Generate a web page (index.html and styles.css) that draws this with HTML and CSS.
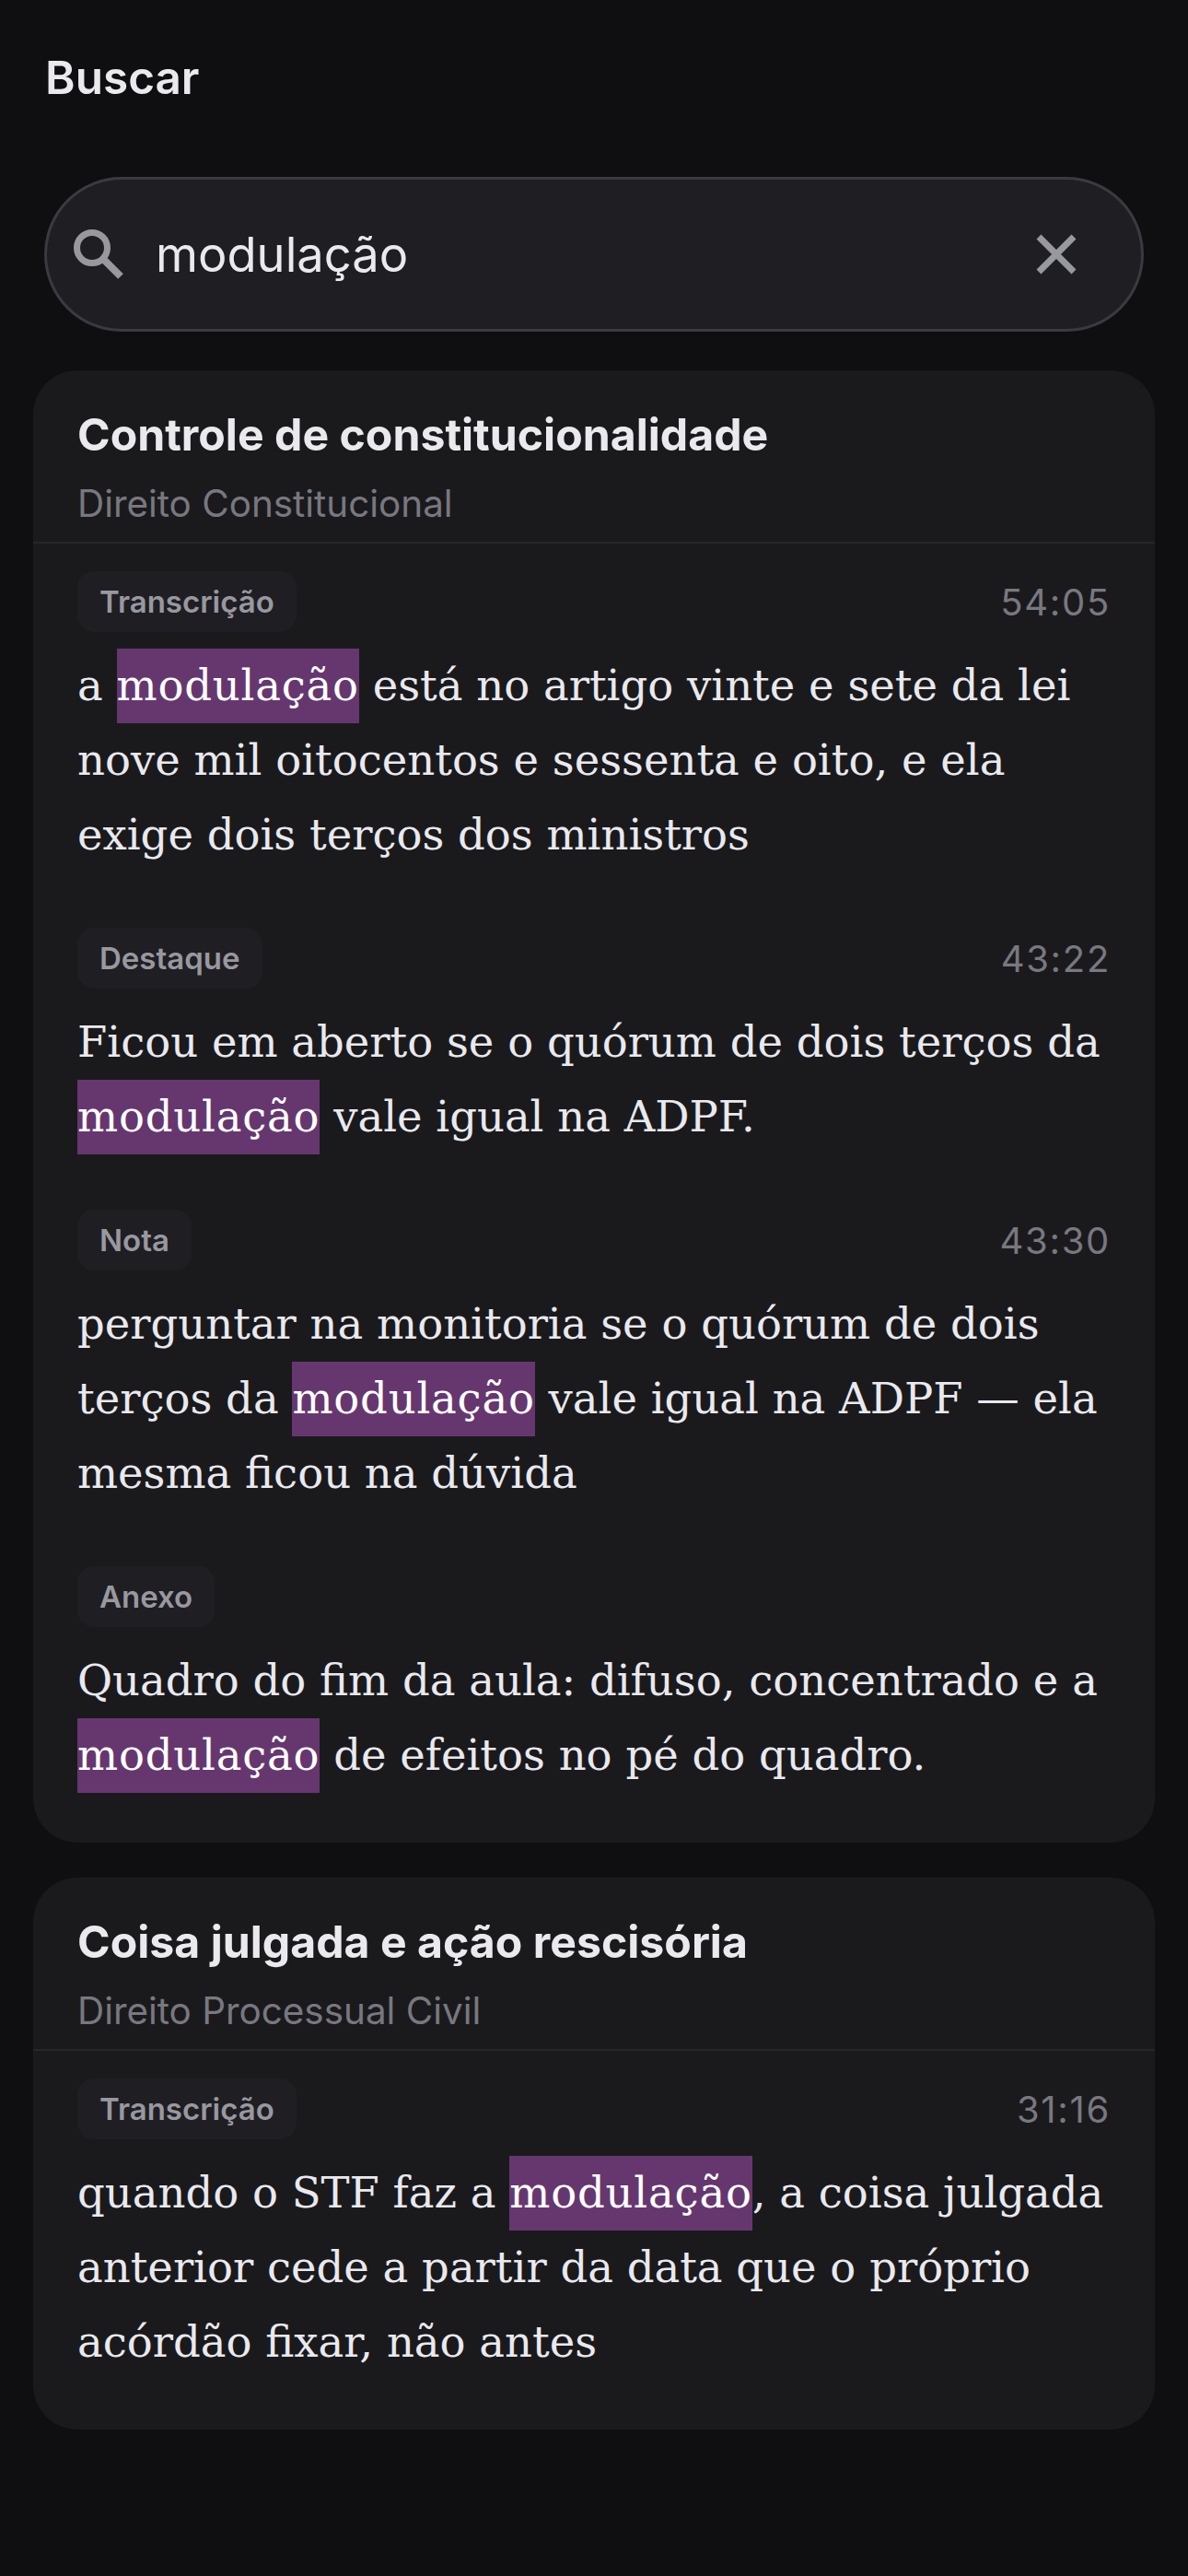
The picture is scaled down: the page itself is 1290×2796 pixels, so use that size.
FILE: index.html
```html
<!DOCTYPE html>
<html lang="pt-BR">

<head>
    <meta charset="UTF-8">
    <title>Buscar</title>
    <link rel="stylesheet" href="styles.css">
</head>

<body>

    <h1 class="page-title">Buscar</h1>

    <!-- Search box -->
    <div class="search-box">
        <svg class="search-icon" viewBox="0 0 54 54" fill="none" stroke="#98989f" stroke-width="7">
            <circle cx="20" cy="20" r="16.5"></circle>
            <path d="M32 32 L51 51" stroke-width="8"></path>
        </svg>
        <span class="search-text">modulação</span>
        <svg class="clear-icon" viewBox="0 0 44 44" fill="none" stroke="#98989f" stroke-width="7">
            <path d="M3 3 L41 41 M41 3 L3 41"></path>
        </svg>
    </div>

    <!-- Result 1 -->
    <section class="card">
        <header class="card-head">
            <h2>Controle de constitucionalidade</h2>
            <p>Direito Constitucional</p>
        </header>

        <div class="hit">
            <div class="hit-top">
                <span class="tag">Transcrição</span>
                <span class="time">54:05</span>
            </div>
            <p class="hit-text">a <mark>modulação</mark> está no artigo vinte e sete da lei nove mil oitocentos e sessenta e oito, e ela exige dois terços dos ministros</p>
        </div>

        <div class="hit">
            <div class="hit-top">
                <span class="tag">Destaque</span>
                <span class="time">43:22</span>
            </div>
            <p class="hit-text">Ficou em aberto se o quórum de dois terços da <mark>modulação</mark> vale igual na ADPF.</p>
        </div>

        <div class="hit">
            <div class="hit-top">
                <span class="tag">Nota</span>
                <span class="time">43:30</span>
            </div>
            <p class="hit-text">perguntar na monitoria se o quórum de dois terços da <mark>modulação</mark> vale igual na ADPF — ela mesma ficou na dúvida</p>
        </div>

        <div class="hit">
            <div class="hit-top">
                <span class="tag">Anexo</span>
            </div>
            <p class="hit-text">Quadro do fim da aula: difuso, concentrado e a <mark>modulação</mark> de efeitos no pé do quadro.</p>
        </div>
    </section>

    <!-- Result 2 -->
    <section class="card">
        <header class="card-head">
            <h2>Coisa julgada e ação rescisória</h2>
            <p>Direito Processual Civil</p>
        </header>

        <div class="hit">
            <div class="hit-top">
                <span class="tag">Transcrição</span>
                <span class="time">31:16</span>
            </div>
            <p class="hit-text">quando o STF faz a <mark>modulação</mark>, a coisa julgada anterior cede a partir da data que o próprio acórdão fixar, não antes</p>
        </div>
    </section>

</body>

</html>
```

FILE: styles.css
```css
body {
    margin: 0;
    padding: 0 36px;
    background-color: #0f0f11;
    font-family: Inter, Roboto, sans-serif;
    color: #e9e9ee;
}

.page-title {
    margin: 0;
    padding: 60px 13px 0;
    font-size: 49.5px;
    line-height: 48px;
    font-weight: 600;
}

.search-box {
    display: flex;
    align-items: center;
    height: 168px;
    box-sizing: border-box;
    margin: 84px 12px 42px;
    padding: 0 70px 0 29px;
    background-color: #1f1e23;
    border: 3px solid #3b3a41;
    border-radius: 84px;
}

.search-icon {
    width: 54px;
    height: 54px;
    margin-right: 35px;
}

.search-text {
    flex: 1;
    font-size: 52.5px;
}

.clear-icon {
    width: 44px;
    height: 44px;
}

.card {
    margin-bottom: 38px;
    padding-bottom: 24px;
    background-color: #1a1a1d;
    border-radius: 48px;
}

.card-head {
    padding: 40px 48px 17px;
    border-bottom: 2px solid #26262b;
}

.card-head h2 {
    margin: 0;
    font-size: 48.2px;
    line-height: 60px;
    font-weight: 700;
}

.card-head p {
    margin: 20px 0 0;
    font-size: 40.4px;
    line-height: 49px;
    color: #78787f;
}

.hit {
    padding: 30px 48px 30px;
}

.hit-top {
    display: flex;
    justify-content: space-between;
    align-items: center;
    min-height: 66px;
}

.tag {
    padding: 0 24px;
    line-height: 66px;
    font-size: 33px;
    font-weight: 600;
    color: #98989f;
    background-color: #1f1e23;
    border-radius: 18px;
}

.time {
    font-size: 40px;
    letter-spacing: 1.7px;
    color: #78787f;
}

.hit-text {
    margin: 18px 0 0;
    font-family: "DejaVu Serif", serif;
    font-size: 46.5px;
    line-height: 81px;
}

mark {
    display: inline-block;
    background-color: #66376f;
    color: #fff;
    letter-spacing: 0.8px;
}
```
